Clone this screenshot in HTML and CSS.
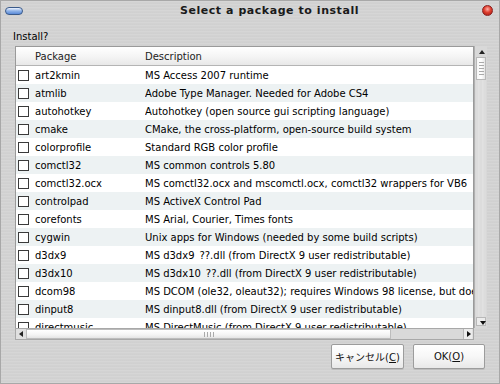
FILE: index.html
```html
<!DOCTYPE html>
<html>
<head>
<meta charset="utf-8">
<link rel="stylesheet" href="styles.css">
</head>
<body>
<div class="window">
  <div class="titlebar">
    <span class="pill"></span>
    <span class="title">Select a package to install</span>
    <span class="close"></span>
  </div>
  <div class="body">
    <div class="label">Install?</div>
    <div class="frame">
      <div class="list">
        <div class="header"><span></span><span>Package</span><span>Description</span></div>
        <div class="row"><span class="cb"></span><span>art2kmin</span><span>MS Access 2007 runtime</span></div>
        <div class="row"><span class="cb"></span><span>atmlib</span><span>Adobe Type Manager. Needed for Adobe CS4</span></div>
        <div class="row"><span class="cb"></span><span>autohotkey</span><span>Autohotkey (open source gui scripting language)</span></div>
        <div class="row"><span class="cb"></span><span>cmake</span><span>CMake, the cross-platform, open-source build system</span></div>
        <div class="row"><span class="cb"></span><span>colorprofile</span><span>Standard RGB color profile</span></div>
        <div class="row"><span class="cb"></span><span>comctl32</span><span>MS common controls 5.80</span></div>
        <div class="row"><span class="cb"></span><span>comctl32.ocx</span><span>MS comctl32.ocx and mscomctl.ocx, comctl32 wrappers for VB6</span></div>
        <div class="row"><span class="cb"></span><span>controlpad</span><span>MS ActiveX Control Pad</span></div>
        <div class="row"><span class="cb"></span><span>corefonts</span><span>MS Arial, Courier, Times fonts</span></div>
        <div class="row"><span class="cb"></span><span>cygwin</span><span>Unix apps for Windows (needed by some build scripts)</span></div>
        <div class="row"><span class="cb"></span><span>d3dx9</span><span>MS d3dx9_??.dll (from DirectX 9 user redistributable)</span></div>
        <div class="row"><span class="cb"></span><span>d3dx10</span><span>MS d3dx10_??.dll (from DirectX 9 user redistributable)</span></div>
        <div class="row"><span class="cb"></span><span>dcom98</span><span>MS DCOM (ole32, oleaut32); requires Windows 98 license, but does no</span></div>
        <div class="row"><span class="cb"></span><span>dinput8</span><span>MS dinput8.dll (from DirectX 9 user redistributable)</span></div>
        <div class="row"><span class="cb"></span><span>directmusic</span><span>MS DirectMusic (from DirectX 9 user redistributable)</span></div>
      </div>
      <div class="vscroll">
        <div class="arrow up"></div>
        <div class="vthumb"><span></span><span></span><span></span><span></span><span></span></div>
        <div class="vtrack"></div>
        <div class="arrow down"></div>
      </div>
      <div class="hscroll">
        <div class="arrow left"></div>
        <div class="hthumb"><span></span><span></span><span></span><span></span></div>
        <div class="htrack"></div>
        <div class="arrow right"></div>
      </div>
      <div class="corner"></div>
    </div>
    <div class="buttons">
      <button class="btn cancel">キャンセル(<u>C</u>)</button>
      <button class="btn ok">OK(<u>O</u>)</button>
    </div>
  </div>
</div>
</body>
</html>
```

FILE: styles.css
```css
* { box-sizing: border-box; }
html, body { margin: 0; padding: 0; }
body {
  width: 500px;
  height: 384px;
  overflow: hidden;
  font-family: "DejaVu Sans", "Noto Sans CJK JP", sans-serif;
  font-size: 10px;
  color: #000;
}
.window {
  width: 500px;
  height: 384px;
  border: 1px solid #a8a8a8;
  background-color: #d2d2d2;
  background-image: repeating-linear-gradient(180deg, #d6d6d6 0px, #d6d6d6 1px, #cecece 2px, #d3d3d3 3px);
  display: flex;
  flex-direction: column;
}
.titlebar {
  height: 21px;
  display: flex;
  align-items: center;
  padding: 0 6px 2px 4px;
}
.pill {
  width: 18px;
  height: 8px;
  border-radius: 4px;
  border: 1px solid #3a5a8a;
  background: linear-gradient(180deg, #eef4ff 0%, #8fb3e8 50%, #5a8ad8 100%);
}
.title {
  flex: 1;
  text-align: center;
  padding-left: 34px;
  font-weight: bold;
  font-size: 11px;
  letter-spacing: 0.55px;
  color: #1a1a1a;
}
.close {
  width: 11px;
  height: 11px;
  border-radius: 50%;
  border: 1px solid #8a2020;
  background: radial-gradient(circle at 50% 35%, #ffb0a8 0%, #e04030 45%, #a01a10 100%);
}
.body {
  flex: 1;
  display: flex;
  flex-direction: column;
  padding: 0 13px 0 12px;
}
.label {
  margin-top: 8px;
  line-height: 14px;
  height: 14px;
  margin-bottom: 2px;
}
.frame {
  margin-left: 2px;
  display: grid;
  grid-template-columns: 459px 13px;
  grid-template-rows: 282px 12px;
  width: 472px;
}
.list {
  border: 1px solid #9a9a9a;
  border-bottom: none;
  background: #fff;
  overflow: hidden;
}
.header, .row {
  display: grid;
  grid-template-columns: 19px 110px 1fr;
  align-items: center;
  white-space: nowrap;
}
.header {
  height: 19px;
  background: linear-gradient(180deg, #ffffff 0%, #f4f4f4 55%, #e8e8e8 100%);
  border-bottom: 1px solid #b4b4b4;
  color: #222;
  padding-top: 1px;
}
.row {
  height: 18px;
}
.row:nth-child(odd) { background: #edf2f3; }
.header span, .row span { overflow: hidden; }
.cb {
  width: 11px;
  height: 11px;
  margin-left: 2px;
  border: 1px solid #3a3a3a;
  background: #fff;
  align-self: center;
}
.vscroll {
  display: flex;
  flex-direction: column;
  background: #d8d8d8;
  border-left: 1px solid #b0b0b0;
  padding: 2px 1px 2px 1px;
}
.arrow {
  flex: none;
  position: relative;
}
.arrow.up, .arrow.down { height: 9px; }
.arrow.up::after, .arrow.down::after {
  content: "";
  position: absolute;
  left: 3px;
  border-left: 3px solid transparent;
  border-right: 3px solid transparent;
}
.arrow.up::after { top: 2px; border-bottom: 4px solid #222; }
.arrow.down::after { top: 3px; border-top: 4px solid #111; }
.arrow.down { background: #ececec; border: 1px solid #b8b8b8; }
.vthumb {
  height: 23px;
  background: linear-gradient(90deg, #f6f6f6, #ffffff 50%, #e6e6e6);
  border: 1px solid #b8b8b8;
  display: flex;
  flex-direction: column;
  justify-content: center;
  align-items: center;
  gap: 2px;
}
.vthumb span { width: 5px; height: 1px; background: #aaa; }
.vtrack {
  flex: 1;
  background: repeating-linear-gradient(90deg, #dcdcdc 0px, #dcdcdc 2px, #e6e6e6 3px, #d8d8d8 4px);
}
.hscroll {
  display: flex;
  border: 1px solid #a8a8a8;
  background: #e0e0e0;
  padding: 0 1px;
}
.arrow.left, .arrow.right { width: 9px; }
.arrow.left::after, .arrow.right::after {
  content: "";
  position: absolute;
  top: 2px;
  border-top: 3px solid transparent;
  border-bottom: 3px solid transparent;
}
.arrow.left::after { left: 2px; border-right: 4px solid #222; }
.arrow.right::after { left: 3px; border-left: 4px solid #111; }
.arrow.right { background: #ececec; border-left: 1px solid #b8b8b8; }
.hthumb {
  width: 365px;
  background: linear-gradient(180deg, #ffffff, #f4f4f4 60%, #e4e4e4);
  border: 1px solid #bcbcbc;
  display: flex;
  justify-content: center;
  align-items: center;
  gap: 2px;
}
.hthumb span { width: 1px; height: 5px; background: #aaa; }
.htrack { flex: 1; background: #d9d9d9; }
.corner { background: transparent; }
.buttons {
  margin-top: 4px;
  display: flex;
  justify-content: flex-end;
  gap: 9px;
  padding-right: 1px;
}
.btn {
  height: 25px;
  font-family: "DejaVu Sans", "Noto Sans CJK JP", sans-serif;
  font-size: 10px;
  white-space: nowrap;
  color: #111;
  background: linear-gradient(180deg, #ffffff 0%, #f7f7f7 50%, #e8e8e8 100%);
  border: 1px solid #9c9c9c;
  border-radius: 2px;
  padding: 0;
  box-shadow: 0 1px 0 #bdbdbd;
}
.cancel { width: 73px; }
.ok { width: 72px; }
```
